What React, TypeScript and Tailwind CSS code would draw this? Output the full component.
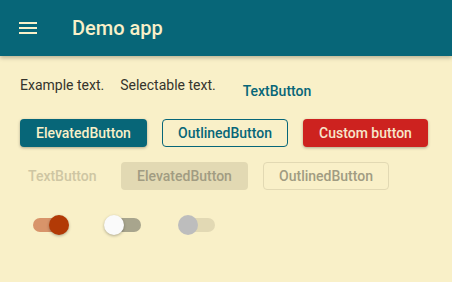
import React from "react";

function Switch({ on, disabled }: { on: boolean; disabled?: boolean }) {
  const track = disabled ? "bg-[#E2D9B4]" : on ? "bg-[#D8946A]" : "bg-[#A8A58D]";
  const thumb = disabled
    ? "bg-[#BDBDBD]"
    : on
    ? "bg-[#B23A06] shadow-[0_1px_3px_rgba(0,0,0,0.3)]"
    : "bg-[#FAFAFA] shadow-[0_1px_3px_rgba(0,0,0,0.3)]";
  return (
    <div className="relative w-[40px] h-[20px] flex items-center">
      <div className={`absolute h-[14px] w-[34px] rounded-full ${track} ${on ? "left-0" : "left-[3px]"}`} />
      <div className={`absolute w-[20px] h-[20px] rounded-full ${thumb} ${on ? "left-[16px]" : "left-0"}`} />
    </div>
  );
}

export default function App() {
  return (
    <div
      className="w-[452px] h-[282px] bg-[#F9F0C8] overflow-hidden"
      style={{ fontFamily: "Roboto, 'Liberation Sans', sans-serif" }}
    >
      <div className="h-[56px] bg-[#076678] flex items-center shadow-[0_2px_4px_rgba(0,0,0,0.25)] relative z-10">
        <svg width="24" height="24" viewBox="0 0 24 24" className="ml-[16px]">
          <path d="M3 18h18v-2H3v2zm0-5h18v-2H3v2zm0-7v2h18V6H3z" fill="#F9F0C8" />
        </svg>
        <span className="ml-[32px] text-[20px] font-medium text-[#F9F0C8] leading-none">Demo app</span>
      </div>

      <div className="pl-[20px] pt-[19px]">
        <div className="flex items-start">
          <span className="text-[14px] leading-[20px] text-[#35342C]">Example text.</span>
          <span className="ml-[16px] text-[14px] leading-[20px] text-[#35342C]">Selectable text.</span>
          <span className="ml-[27px] mt-[6px] text-[14px] leading-[20px] font-medium text-[#076678]">TextButton</span>
        </div>

        <div className="flex mt-[18px] gap-[15px]">
          <div className="w-[127px] h-[28px] rounded-[4px] bg-[#076678] text-[#F9F0C8] text-[14px] font-medium flex items-center justify-center shadow-[0_1px_3px_rgba(0,0,0,0.3)]">
            ElevatedButton
          </div>
          <div className="w-[126px] h-[28px] rounded-[4px] border border-[#076678] text-[#076678] text-[14px] font-medium flex items-center justify-center">
            OutlinedButton
          </div>
          <div className="w-[125px] h-[28px] rounded-[4px] bg-[#CD221F] text-[#F7E6CB] text-[14px] font-medium flex items-center justify-center shadow-[0_1px_3px_rgba(0,0,0,0.3)]">
            Custom button
          </div>
        </div>

        <div className="flex mt-[15px] items-center">
          <div className="w-[85px] h-[28px] flex items-center pl-[8px] text-[14px] font-medium text-[#CEC6A3]">
            TextButton
          </div>
          <div className="ml-[16px] w-[127px] h-[28px] rounded-[4px] bg-[#E2D9B3] text-[#A19C82] text-[14px] font-medium flex items-center justify-center">
            ElevatedButton
          </div>
          <div className="ml-[15px] w-[126px] h-[28px] rounded-[4px] border border-[#E2D9B3] text-[#A19C82] text-[14px] font-medium flex items-center justify-center">
            OutlinedButton
          </div>
        </div>

        <div className="flex mt-[25px] ml-[13px] h-[20px]">
          <Switch on />
          <div className="ml-[31px]">
            <Switch on={false} />
          </div>
          <div className="ml-[34px]">
            <Switch on={false} disabled />
          </div>
        </div>
      </div>
    </div>
  );
}
